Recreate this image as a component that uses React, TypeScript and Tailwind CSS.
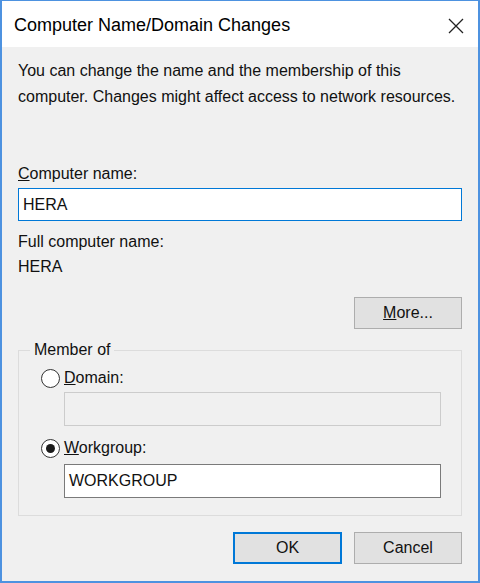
import React from "react";

const font = { fontFamily: '"Liberation Sans", Arial, sans-serif' };

function Radio({ checked }: { checked?: boolean }) {
  return (
    <span className="flex h-[19px] w-[19px] items-center justify-center rounded-full border border-[#333333] bg-white">
      {checked && <span className="h-[9px] w-[9px] rounded-full bg-[#1b1b1b]" />}
    </span>
  );
}

export default function App() {
  return (
    <div
      className="flex h-[583px] w-[480px] flex-col border-x-2 border-b-2 border-t border-[#4d92e0] bg-[#f0f0f0] text-[16px] text-[#111]"
      style={font}
    >
      {/* title bar */}
      <div className="flex h-[46px] shrink-0 items-center justify-between bg-white pl-3 pr-[14px] pt-[3px]">
        <span className="text-[18px] text-black">Computer Name/Domain Changes</span>
        <svg width="16" height="16" viewBox="0 0 16 16">
          <path d="M1 1 L15 15 M15 1 L1 15" stroke="#222" strokeWidth="1.3" />
        </svg>
      </div>

      <div className="flex flex-1 flex-col px-4">
        <p className="mt-[11px] leading-[26px]">
          You can change the name and the membership of this
          <br />
          computer. Changes might affect access to network resources.
        </p>

        <div className="mt-[54px] leading-[20px]">
          <span className="underline">C</span>omputer name:
        </div>
        <div className="mt-[4px] flex h-[33px] items-center border border-[#0078d7] bg-white px-[4px]">
          HERA
        </div>

        <div className="mt-[11px] leading-[20px]">Full computer name:</div>
        <div className="mt-[5px] leading-[20px]">HERA</div>

        <div className="mt-[20px] flex justify-end">
          <button className="flex h-[32px] w-[108px] items-center justify-center border border-[#adadad] bg-[#e1e1e1]">
            <span>
              <span className="underline">M</span>ore...
            </span>
          </button>
        </div>

        <fieldset className="mt-[11px] h-[176px] border border-[#dcdcdc] pl-[22px] pr-[20px]">
          <legend className="-ml-[11px] px-[4px] leading-[20px]">Member of</legend>
          <label className="mt-[6px] flex items-center gap-[4px]">
            <Radio />
            <span>
              <span className="underline">D</span>omain:
            </span>
          </label>
          <div className="ml-[23px] mt-[2px] h-[34px] border border-[#cccccc] bg-[#f0f0f0]" />

          <label className="mt-[10px] flex items-center gap-[4px]">
            <Radio checked />
            <span>
              <span className="underline">W</span>orkgroup:
            </span>
          </label>
          <div className="ml-[23px] mt-[4px] flex h-[34px] items-center border border-[#7a7a7a] bg-white px-[4px]">
            WORKGROUP
          </div>
        </fieldset>

        <div className="mt-[16px] flex justify-end gap-[12px]">
          <button className="h-[32px] w-[109px] border-2 border-[#0078d7] bg-[#e1e1e1]">OK</button>
          <button className="h-[32px] w-[108px] border border-[#adadad] bg-[#e1e1e1]">Cancel</button>
        </div>
      </div>
    </div>
  );
}
